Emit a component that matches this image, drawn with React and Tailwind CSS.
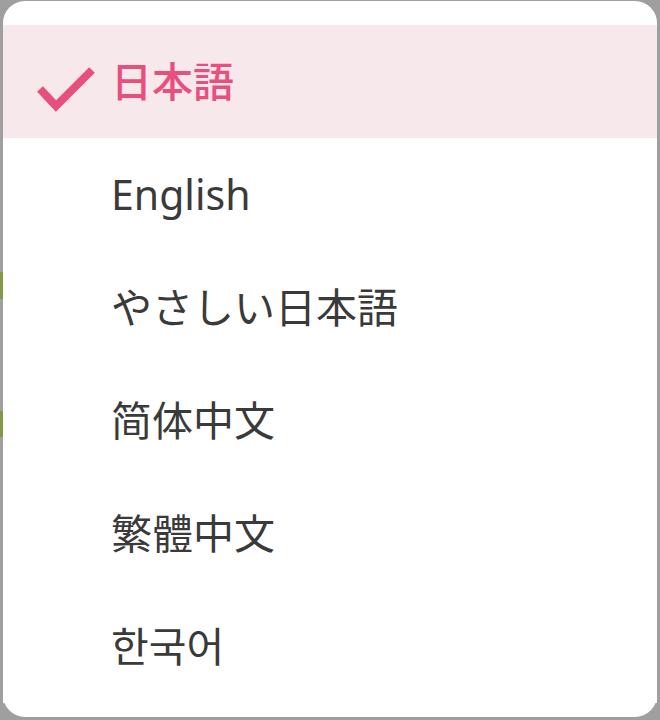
import { useState } from "react";

const languages = ["日本語", "English", "やさしい日本語", "简体中文", "繁體中文", "한국어"];

const CheckMark = () => (
  <svg width="60" height="60" viewBox="0 0 60 60" className="shrink-0">
    <polyline
      points="4,37 20,54 56,18"
      fill="none"
      stroke="#e94f7c"
      strokeWidth="8"
      strokeLinecap="butt"
      strokeLinejoin="miter"
    />
  </svg>
);

const App = () => {
  const [selected, setSelected] = useState("日本語");

  return (
    <div className="w-[660px] h-[720px] bg-[#9f9f9f] flex overflow-hidden">
      {/* dimmed page behind the sheet */}
      <div className="w-[3px] shrink-0 flex flex-col">
        <div className="h-[272px]" />
        <div className="h-[27px] bg-[#7f9a48]" />
        <div className="h-[112px]" />
        <div className="h-[26px] bg-[#7f9a48]" />
      </div>

      <div
        className="mt-[1px] w-[654px] h-[716px] bg-white rounded-[22px] pt-6 flex flex-col"
        style={{ fontFamily: '"Noto Sans", "Noto Sans CJK JP", "Noto Sans CJK KR", sans-serif' }}
      >
        {languages.map((lang) => {
          const active = lang === selected;
          return (
            <button
              key={lang}
              onClick={() => setSelected(lang)}
              className={`h-[113px] w-full flex items-center text-left ${
                active ? "bg-[#f7e8ec]" : "bg-white"
              }`}
            >
              <div className="w-[108px] pl-[33px] flex items-center">
                {active && <CheckMark />}
              </div>
              <span
                className={`text-[41px] leading-none ${
                  active ? "text-[#e94f7c] font-medium" : "text-[#3a3a3a]"
                }`}
              >
                {lang}
              </span>
            </button>
          );
        })}
      </div>
    </div>
  );
};

export default App;
